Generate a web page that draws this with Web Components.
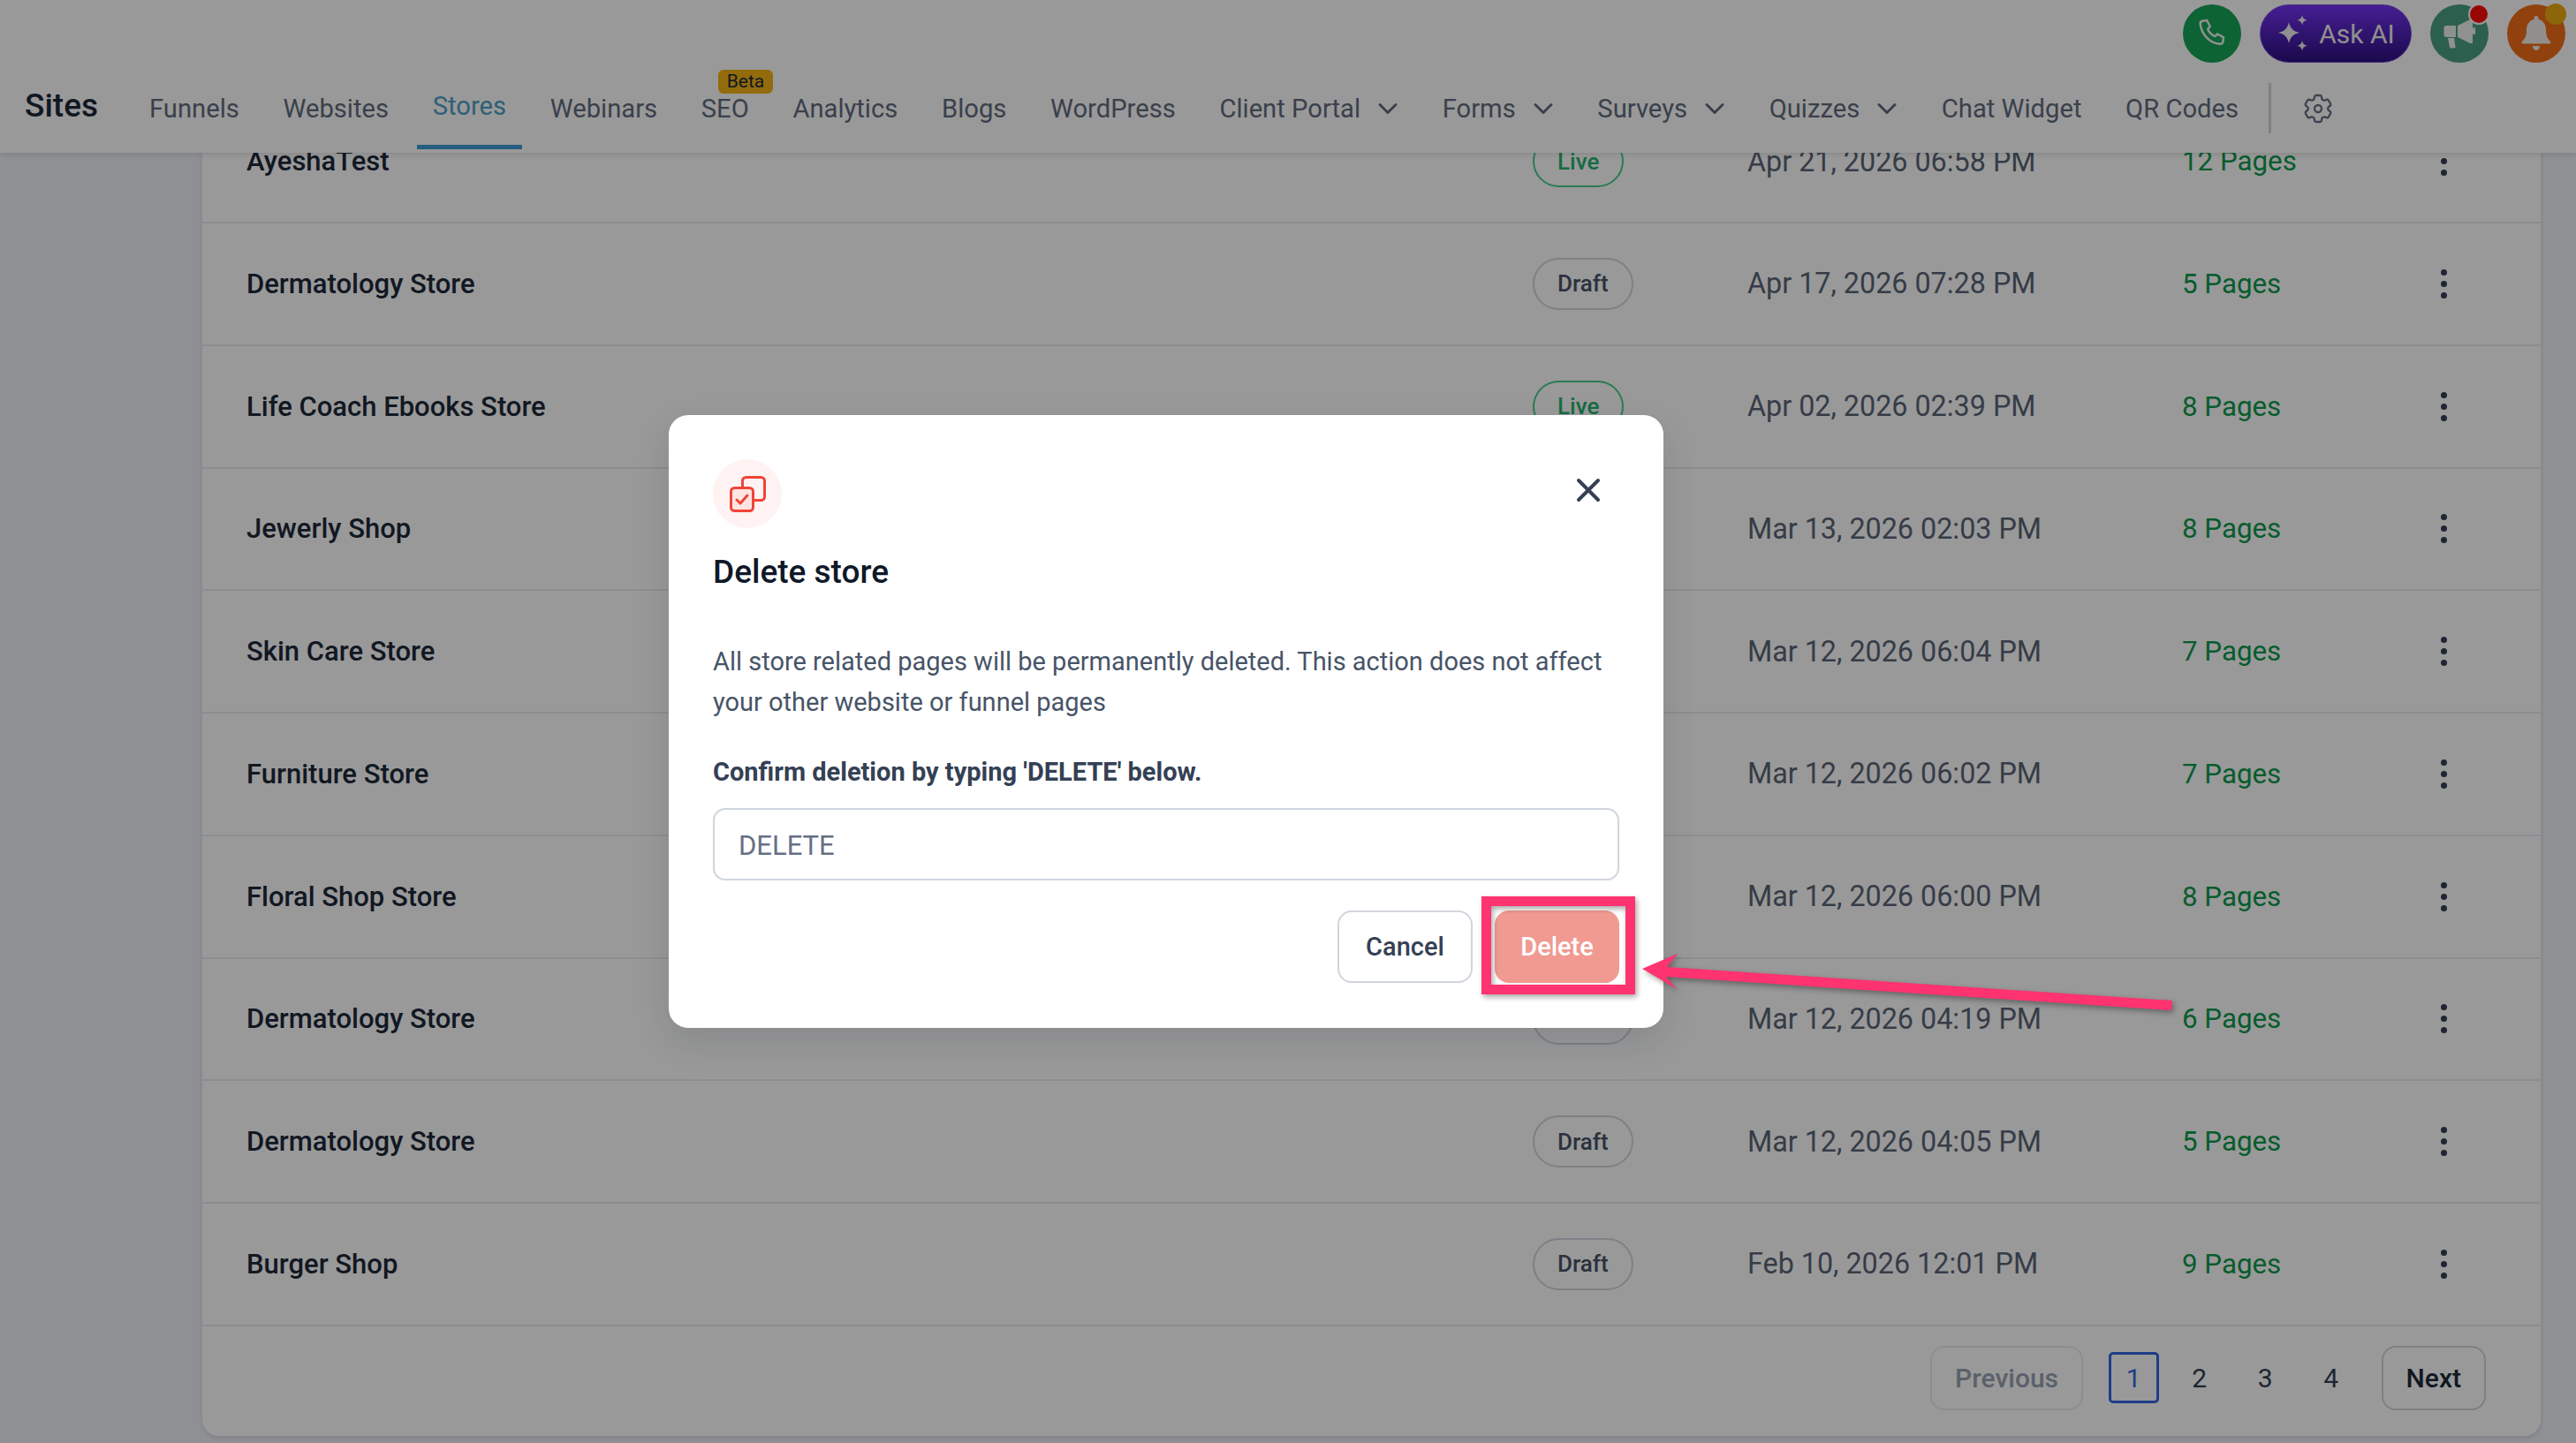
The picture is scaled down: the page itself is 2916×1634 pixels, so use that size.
<!DOCTYPE html>
<html>
<head>
<meta charset="utf-8">
<title>Sites</title>
<style>
    html, body {
        margin: 0;
        width: 2916px;
        height: 1634px;
        overflow: hidden;
        background: #eef1f6;
        font-family: Roboto, "Liberation Sans", sans-serif;
    }
</style>
</head>
<body>
<site-header></site-header>
<store-table></store-table>
<modal-overlay>
    <delete-modal></delete-modal>
</modal-overlay>
<delete-callout></delete-callout>

<script>
const CHEVRON = `<svg width="24" height="14" viewBox="0 0 24 14" fill="none" stroke="currentColor" stroke-width="3" stroke-linecap="round" stroke-linejoin="round"><path d="M3 2.5l9 9 9-9"/></svg>`

const tabs = [
    { label: 'Funnels' },
    { label: 'Websites' },
    { label: 'Stores', active: true },
    { label: 'Webinars' },
    { label: 'SEO', badge: 'Beta' },
    { label: 'Analytics' },
    { label: 'Blogs' },
    { label: 'WordPress' },
    { label: 'Client Portal', menu: true },
    { label: 'Forms', menu: true },
    { label: 'Surveys', menu: true },
    { label: 'Quizzes', menu: true },
    { label: 'Chat Widget' },
    { label: 'QR Codes' },
]

// rows 4-7 have their status hidden behind the dialog
const stores = [
    ['AyeshaTest', 'Live', 'Apr 21, 2026 06:58 PM', '12 Pages'],
    ['Dermatology Store', 'Draft', 'Apr 17, 2026 07:28 PM', '5 Pages'],
    ['Life Coach Ebooks Store', 'Live', 'Apr 02, 2026 02:39 PM', '8 Pages'],
    ['Jewerly Shop', '', 'Mar 13, 2026 02:03 PM', '8 Pages'],
    ['Skin Care Store', '', 'Mar 12, 2026 06:04 PM', '7 Pages'],
    ['Furniture Store', '', 'Mar 12, 2026 06:02 PM', '7 Pages'],
    ['Floral Shop Store', '', 'Mar 12, 2026 06:00 PM', '8 Pages'],
    ['Dermatology Store', 'Draft', 'Mar 12, 2026 04:19 PM', '6 Pages'],
    ['Dermatology Store', 'Draft', 'Mar 12, 2026 04:05 PM', '5 Pages'],
    ['Burger Shop', 'Draft', 'Feb 10, 2026 12:01 PM', '9 Pages'],
]

customElements.define(
    'nav-tab',
    class extends HTMLElement {
        connectedCallback() {
            const shadow = this.attachShadow({ mode: 'open' })

            shadow.innerHTML = `
                <style>
                    :host {
                        display: flex;
                        position: relative;
                        align-items: center;
                        gap: 19px;
                        height: 93px;
                        padding: 0 18px;
                        box-sizing: border-box;
                        color: #626c7d;
                        font-size: 29.2px;
                        white-space: nowrap;
                    }
                    :host([active]) {
                        color: #4f9fc9;
                        border-bottom: 5px solid #3d9bd6;
                    }
                    .badge {
                        position: absolute;
                        left: 37px;
                        top: 3px;
                        padding: 0 10px;
                        height: 27px;
                        line-height: 27px;
                        border-radius: 6px;
                        background: #f3b414;
                        color: #1d2939;
                        font-size: 21px;
                    }
                </style>
                <slot></slot>
                ${this.getAttribute('badge') ? `<span class="badge">${this.getAttribute('badge')}</span>` : ''}
                ${this.hasAttribute('menu') ? CHEVRON : ''}
            `
        }
    }
)

customElements.define(
    'round-action',
    class extends HTMLElement {
        constructor() {
            super()

            const shadow = this.attachShadow({ mode: 'open' })
            shadow.innerHTML = `
                <style>
                    :host {
                        display: flex;
                        position: relative;
                        align-items: center;
                        justify-content: center;
                        width: 66px;
                        height: 66px;
                        border-radius: 50%;
                        background: var(--bg);
                    }
                    .dot {
                        display: none;
                        position: absolute;
                        top: -1px;
                        right: -1px;
                        width: 20px;
                        height: 20px;
                        border-radius: 50%;
                        background: var(--dot);
                        border: 2px solid var(--ring, transparent);
                    }
                    :host([dot]) .dot {
                        display: block;
                    }
                </style>
                <slot></slot>
                <span class="dot"></span>
            `
        }
    }
)

customElements.define(
    'site-header',
    class extends HTMLElement {
        constructor() {
            super()

            const shadow = this.attachShadow({ mode: 'open' })
            shadow.innerHTML = `
                <style>
                    :host {
                        display: block;
                        position: relative;
                        z-index: 1;
                        height: 173px;
                        background: #fff;
                        box-shadow: 0 2px 6px rgba(16, 24, 40, 0.12);
                    }
                    .top {
                        display: flex;
                        justify-content: flex-end;
                        align-items: center;
                        gap: 21px;
                        height: 66px;
                        padding: 5px 12px 0 0;
                    }
                    .ask {
                        display: flex;
                        align-items: center;
                        justify-content: center;
                        gap: 10px;
                        width: 172px;
                        height: 66px;
                        box-sizing: border-box;
                        border-radius: 33px;
                        border: 1px solid #7c4ddb;
                        background: linear-gradient(#7433f5, #2e0f80);
                        color: #eee;
                        font-size: 30px;
                    }
                    .nav {
                        display: flex;
                        align-items: flex-start;
                        margin-top: 5px;
                        padding-left: 28px;
                    }
                    .title {
                        margin-right: 40px;
                        height: 93px;
                        line-height: 87px;
                        color: #1d2939;
                        font-size: 37px;
                        font-weight: 500;
                    }
                    .tabs {
                        display: flex;
                        gap: 13.650px;
                    }
                    .divider {
                        width: 3px;
                        height: 57px;
                        margin: 18px 0 0 16px;
                        background: #d0d5dd;
                    }
                    .gear {
                        margin: 27px 0 0 33px;
                    }
                </style>
                <div class="top">
                    <round-action style="--bg: #17a558">
                        <svg width="40" height="40" viewBox="0 0 24 24" fill="none" stroke="#eef2ee" stroke-width="1.5" stroke-linecap="round" stroke-linejoin="round"><path d="M5.5 3.5l3-.5 2.2 4.2-1.6 1.7c.8 2.2 2.6 4 4.9 5l1.7-1.6 4.1 2.3-.4 3c-.2 1-1 1.6-2 1.5C10.700 18.600 5 13 4 5.600c-.1-1 .5-1.900 1.500-2.100z"/></svg>
                    </round-action>
                    <div class="ask">
                        <svg width="38" height="44" viewBox="0 0 38 44" fill="#eee"><path d="M14 9c1.500 7 5 10.500 12 12-7 1.500-10.500 5-12 12-1.500-7-5-10.500-12-12 7-1.500 10.500-5 12-12z"/><path d="M29 1c.7 3.500 2.200 5 5.700 5.700-3.500.7-5 2.200-5.700 5.700-.7-3.500-2.200-5-5.700-5.700 3.500-.7 5-2.200 5.700-5.700z"/><path d="M29 30c.7 3.500 2.200 5 5.700 5.700-3.500.7-5 2.200-5.700 5.700-.7-3.500-2.200-5-5.700-5.700 3.500-.7 5-2.200 5.700-5.700z"/></svg>
                        <span>Ask AI</span>
                    </div>
                    <round-action dot style="--bg: #4b9f82; --dot: #ff0a0a; --ring: #fff">
                        <svg width="38" height="36" viewBox="0 0 38 36" fill="#eef2ee"><path d="M31 2l3 0 0 27-3 0-14-7 0-13z"/><path d="M4 9h11v13H4c-1.500 0-2.500-1-2.500-2.500v-8C1.500 10 2.500 9 4 9z"/><path d="M6 23h7l1.500 10c.1 1-.5 1.500-1.400 1.500H9.500c-.9 0-1.400-.5-1.500-1.300z"/><rect x="34" y="11" width="3" height="8" rx="1.500"/></svg>
                    </round-action>
                    <round-action dot style="--bg: #f26d18; --dot: #ecaa12">
                        <svg width="34" height="42" viewBox="0 0 34 42" fill="#f2eeea"><path d="M17 1c1.500 0 2.500 1 2.500 2.500V5C25 6.200 28 11 28 17c0 6 1.500 9.500 5 13 .8 1 .3 2.500-1.200 2.500H2.200C.7 32.500.2 31 1 30c3.500-3.500 5-7 5-13 0-6 3-10.800 8.500-12V3.500C14.500 2 15.500 1 17 1z"/><path d="M13 35h8c0 2.500-1.800 5-4 5s-4-2.500-4-5z"/></svg>
                    </round-action>
                </div>
                <div class="nav">
                    <div class="title">Sites</div>
                    <div class="tabs" id="tabs"></div>
                    <div class="divider"></div>
                    <svg class="gear" width="40" height="40" viewBox="0 0 24 24" fill="none" stroke="#667085" stroke-width="1.4" stroke-linecap="round" stroke-linejoin="round"><path d="M9.594 3.94c.09-.542.56-.94 1.11-.94h2.593c.55 0 1.02.398 1.11.94l.213 1.281c.063.374.313.686.645.87.074.04.147.083.22.127.324.196.72.257 1.075.124l1.217-.456a1.125 1.125 0 011.37.49l1.296 2.247a1.125 1.125 0 01-.26 1.431l-1.003.827c-.293.24-.438.613-.431.992a6.759 6.759 0 010 .255c-.007.378.138.75.43.99l1.005.828c.424.35.534.954.26 1.43l-1.298 2.247a1.125 1.125 0 01-1.369.491l-1.217-.456c-.355-.133-.75-.072-1.076.124a6.57 6.57 0 01-.22.128c-.331.183-.581.495-.644.869l-.213 1.28c-.09.543-.56.941-1.11.941h-2.594c-.55 0-1.02-.398-1.11-.94l-.213-1.281c-.062-.374-.312-.686-.644-.87a6.52 6.52 0 01-.22-.127c-.325-.196-.72-.257-1.076-.124l-1.217.456a1.125 1.125 0 01-1.369-.49l-1.297-2.247a1.125 1.125 0 01.26-1.431l1.004-.827c.292-.24.437-.613.43-.992a6.932 6.932 0 010-.255c.007-.378-.138-.75-.43-.99l-1.004-.828a1.125 1.125 0 01-.26-1.43l1.297-2.247a1.125 1.125 0 011.37-.491l1.216.456c.356.133.751.072 1.076-.124.072-.044.146-.087.22-.128.332-.183.582-.495.644-.869l.214-1.281z"/><circle cx="12" cy="12" r="2.400"/></svg>
                </div>
            `

            const box = shadow.getElementById('tabs')

            for (const tab of tabs) {
                const elem = document.createElement('nav-tab')

                elem.textContent = tab.label
                if (tab.active) elem.setAttribute('active', '')
                if (tab.menu) elem.setAttribute('menu', '')
                if (tab.badge) elem.setAttribute('badge', tab.badge)

                box.appendChild(elem)
            }
        }
    }
)

customElements.define(
    'status-pill',
    class extends HTMLElement {
        constructor() {
            super()

            const shadow = this.attachShadow({ mode: 'open' })
            shadow.innerHTML = `
                <style>
                    :host {
                        display: inline-flex;
                        align-items: center;
                        justify-self: start;
                        height: 59px;
                        padding: 0 26px;
                        box-sizing: border-box;
                        border: 2px solid #d0d5dd;
                        border-radius: 30px;
                        color: #475467;
                        font-size: 26px;
                        font-weight: 500;
                    }
                    :host([kind='Live']) {
                        border-color: #47cd89;
                        color: #27b36f;
                    }
                </style>
                <slot></slot>
            `
        }
    }
)

customElements.define(
    'store-row',
    class extends HTMLElement {
        constructor() {
            super()

            const shadow = this.attachShadow({ mode: 'open' })
            shadow.innerHTML = `
                <style>
                    :host {
                        display: grid;
                        grid-template-columns: 1456px 243px 492px 293px auto;
                        align-items: center;
                        height: 138.750px;
                        padding-left: 50px;
                        box-sizing: border-box;
                        border-bottom: 2px solid #eaecf0;
                        font-size: 31px;
                    }
                    .name {
                        color: #1d2939;
                        font-weight: 500;
                    }
                    .date {
                        color: #5b6577;
                        font-size: 32.3px;
                    }
                    .pages {
                        color: #0e9a4c;
                        font-size: 31.3px;
                    }
                    .kebab {
                        display: flex;
                        flex-direction: column;
                        gap: 6px;
                    }
                    .kebab i {
                        width: 7px;
                        height: 7px;
                        border-radius: 50%;
                        background: #344054;
                    }
                </style>
                <div class="name"></div>
                <div class="status"></div>
                <div class="date"></div>
                <div class="pages"></div>
                <div class="kebab"><i></i><i></i><i></i></div>
            `
        }

        setStore([name, status, date, pages]) {
            const root = this.shadowRoot

            root.querySelector('.name').textContent = name
            root.querySelector('.date').textContent = date
            root.querySelector('.pages').textContent = pages

            if (status) {
                const pill = document.createElement('status-pill')

                pill.textContent = status
                pill.setAttribute('kind', status)
                root.querySelector('.status').appendChild(pill)
            }
        }
    }
)

customElements.define(
    'page-button',
    class extends HTMLElement {
        constructor() {
            super()

            const shadow = this.attachShadow({ mode: 'open' })
            shadow.innerHTML = `
                <style>
                    :host {
                        display: flex;
                        align-items: center;
                        justify-content: center;
                        box-sizing: border-box;
                        color: #344054;
                        font-size: 30px;
                    }
                    :host([kind='num']) {
                        width: 57px;
                        height: 58px;
                        border-radius: 5px;
                    }
                    :host([current]) {
                        border: 3px solid #3366e0;
                        color: #3366e0;
                    }
                    :host([kind='step']) {
                        height: 73px;
                        padding: 0 26px;
                        border: 2px solid #d0d5dd;
                        border-radius: 16px;
                        color: #1d2939;
                        font-weight: 500;
                    }
                    :host([disabled]) {
                        border-color: #eaecf0;
                        color: #98a2b3;
                    }
                </style>
                <slot></slot>
            `
        }
    }
)

customElements.define(
    'store-table',
    class extends HTMLElement {
        constructor() {
            super()

            const shadow = this.attachShadow({ mode: 'open' })
            shadow.innerHTML = `
                <style>
                    :host {
                        display: block;
                        margin: -59.750px 39px 0 228px;
                        height: 1514px;
                        box-sizing: border-box;
                        background: #fff;
                        border: 1px solid #e4e7ec;
                        border-radius: 0 0 20px 20px;
                        box-shadow: 0 2px 4px rgba(16, 24, 40, 0.1);
                    }
                    .footer {
                        display: flex;
                        justify-content: flex-end;
                        align-items: center;
                        gap: 17.500px;
                        height: 117px;
                        padding-right: 62px;
                    }
                    .footer page-button:first-child {
                        margin-right: 11px;
                    }
                    .footer page-button:last-child {
                        margin-left: 11px;
                    }
                </style>
                <div id="rows"></div>
                <div class="footer">
                    <page-button kind="step" disabled>Previous</page-button>
                    <page-button kind="num" current>1</page-button>
                    <page-button kind="num">2</page-button>
                    <page-button kind="num">3</page-button>
                    <page-button kind="num">4</page-button>
                    <page-button kind="step">Next</page-button>
                </div>
            `

            const rows = shadow.getElementById('rows')

            for (const store of stores) {
                const row = document.createElement('store-row')

                row.setStore(store)
                rows.appendChild(row)
            }
        }
    }
)

customElements.define(
    'modal-overlay',
    class extends HTMLElement {
        constructor() {
            super()

            const shadow = this.attachShadow({ mode: 'open' })
            shadow.innerHTML = `
                <style>
                    :host {
                        display: grid;
                        position: absolute;
                        inset: 0;
                        z-index: 2;
                        place-items: center;
                        padding-right: 276px;
                        background: rgba(0, 0, 0, 0.4);
                    }
                </style>
                <slot></slot>
            `
        }
    }
)

customElements.define(
    'delete-modal',
    class extends HTMLElement {
        constructor() {
            super()

            const shadow = this.attachShadow({ mode: 'open' })
            shadow.innerHTML = `
                <style>
                    :host {
                        display: block;
                        position: relative;
                        width: 1126px;
                        height: 694px;
                        padding: 50px;
                        box-sizing: border-box;
                        border-radius: 22px;
                        background: #fff;
                        box-shadow: 0 16px 40px rgba(16, 24, 40, 0.12);
                    }
                    .icon {
                        display: flex;
                        align-items: center;
                        justify-content: center;
                        width: 78px;
                        height: 78px;
                        border-radius: 50%;
                        background: #fef3f2;
                    }
                    .close {
                        position: absolute;
                        top: 71px;
                        right: 71px;
                    }
                    h2 {
                        margin: 28px 0 0;
                        color: #101828;
                        font-size: 37px;
                        font-weight: 500;
                        line-height: 44px;
                    }
                    p {
                        margin: 56px 0 0;
                        color: #475467;
                        font-size: 29px;
                        line-height: 46px;
                    }
                    label {
                        display: block;
                        margin-top: 34px;
                        color: #344054;
                        font-size: 29px;
                        font-weight: 700;
                        line-height: 44px;
                    }
                    .input {
                        display: flex;
                        align-items: center;
                        height: 82px;
                        margin-top: 19px;
                        padding: 2px 0 0 27px;
                        box-sizing: border-box;
                        border: 2px solid #d0d5dd;
                        border-radius: 14px;
                        color: #667085;
                        font-size: 31px;
                    }
                    .actions {
                        display: flex;
                        justify-content: flex-end;
                        gap: 25px;
                        margin-top: 34px;
                    }
                    .btn {
                        display: flex;
                        align-items: center;
                        justify-content: center;
                        height: 82px;
                        box-sizing: border-box;
                        border-radius: 16px;
                        font-size: 29px;
                        font-weight: 500;
                    }
                    .cancel {
                        width: 153px;
                        border: 2px solid #d0d5dd;
                        color: #344054;
                    }
                    .delete {
                        width: 141px;
                        background: #f09a92;
                        color: #fff;
                    }
                </style>
                <div class="icon">
                    <svg width="41" height="41" viewBox="0 0 41 41" fill="none" stroke="#f04438" stroke-width="3" stroke-linecap="round" stroke-linejoin="round">
                        <rect x="14.500" y="1.500" width="25" height="26" rx="4"/>
                        <rect x="1.500" y="13.500" width="25" height="26" rx="4" fill="#fee4e2"/>
                        <path d="M8 27l4 4 8-9"/>
                    </svg>
                </div>
                <svg class="close" width="28" height="28" viewBox="0 0 28 28" fill="none" stroke="#344054" stroke-width="4" stroke-linecap="round"><path d="M3 3l22 22M25 3L3 25"/></svg>
                <h2>Delete store</h2>
                <p>All store related pages will be permanently deleted. This action does not affect your other website or funnel pages</p>
                <label>Confirm deletion by typing 'DELETE' below.</label>
                <div class="input">DELETE</div>
                <div class="actions">
                    <div class="btn cancel">Cancel</div>
                    <div class="btn delete">Delete</div>
                </div>
            `
        }
    }
)

customElements.define(
    'delete-callout',
    class extends HTMLElement {
        constructor() {
            super()

            const shadow = this.attachShadow({ mode: 'open' })
            shadow.innerHTML = `
                <style>
                    :host {
                        display: block;
                        position: absolute;
                        inset: 0;
                        z-index: 3;
                        pointer-events: none;
                    }
                    svg {
                        display: block;
                        filter: drop-shadow(2px 3px 3px rgba(0, 0, 0, 0.35));
                    }
                </style>
                <svg width="2916" height="1634" viewBox="0 0 2916 1634">
                    <rect x="1682.500" y="1020.500" width="163" height="100" fill="none" stroke="#fe3370" stroke-width="11"/>
                    <path d="M1859 1097L1899 1080L1887 1095L2459 1133L2458 1144L1886 1106L1898 1120Z" fill="#fe3370"/>
                </svg>
            `
        }
    }
)
</script>
</body>
</html>
